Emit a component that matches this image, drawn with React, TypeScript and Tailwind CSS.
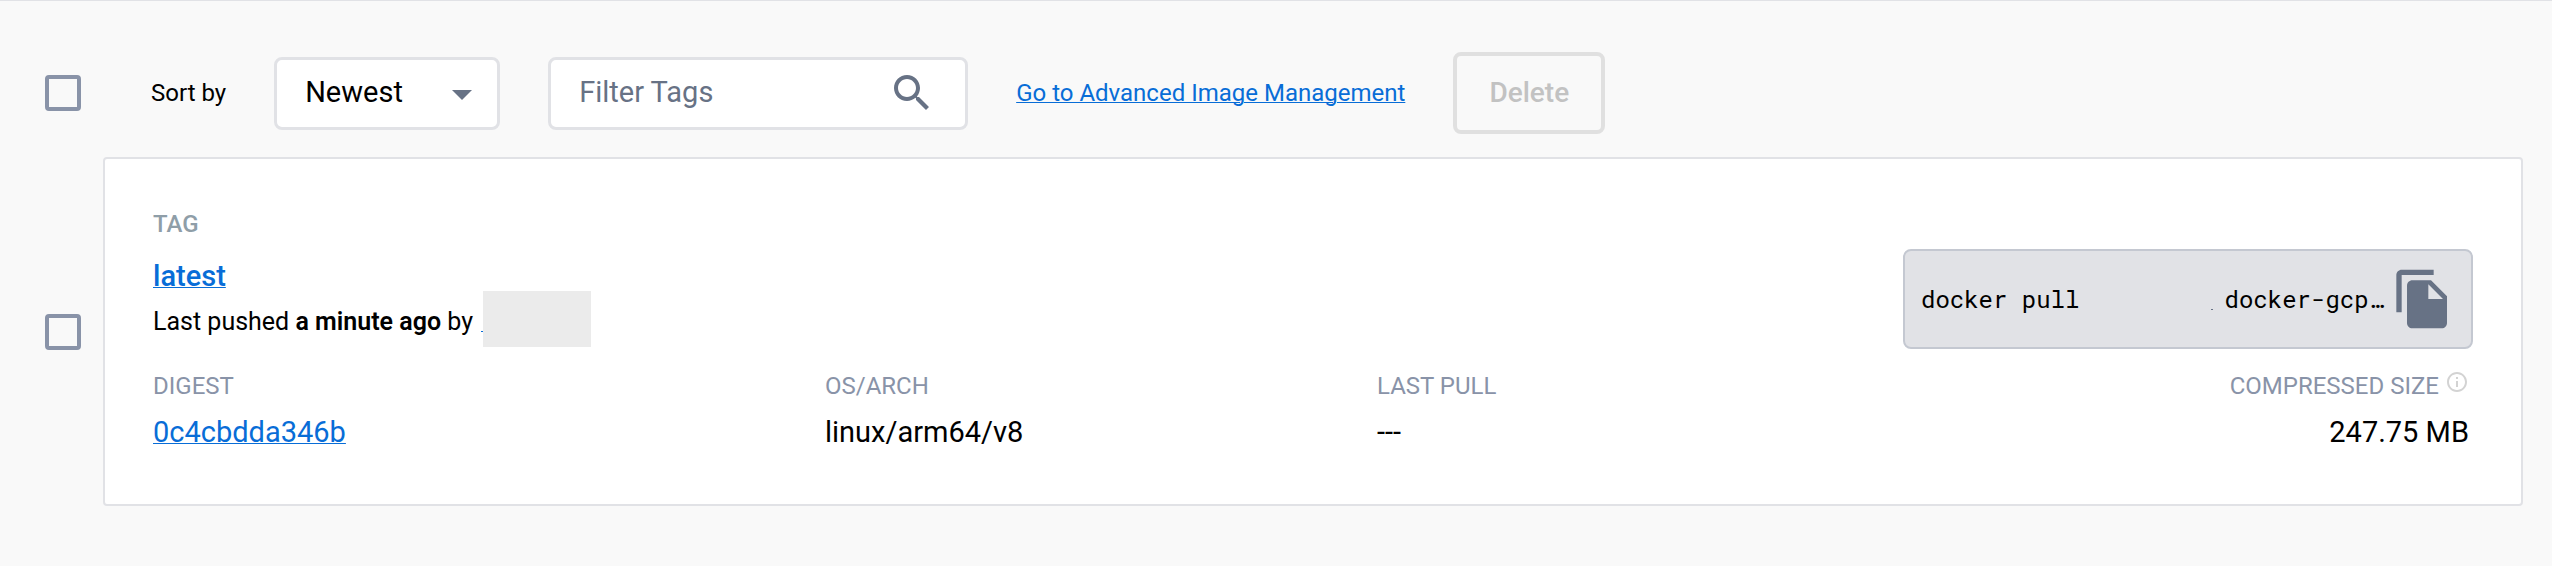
import { useState } from 'react'

const tag = {
  name: 'latest',
  pushed: 'a minute ago',
  digest: '0c4cbdda346b',
  arch: 'linux/arm64/v8',
  lastPull: '---',
  size: '247.75 MB',
}

const linkStyle = 'text-[#086dd7] underline decoration-1 underline-offset-1'

function Checkbox({ label }: { label: string }) {
  return (
    <input
      type="checkbox"
      aria-label={label}
      className="w-9 h-9 shrink-0 appearance-none rounded border-4 border-[#8993a8] checked:bg-[#8993a8]"
    />
  )
}

function Toolbar() {
  const [sort, setSort] = useState('newest')
  const [filter, setFilter] = useState('')

  return (
    <div className="flex items-center">
      <Checkbox label="Select all tags" />
      <label htmlFor="sort" className="ml-[70px] text-2xl">
        Sort by
      </label>

      <div className="relative ml-12 w-[226px] h-[73px]">
        <select
          id="sort"
          value={sort}
          onChange={e => setSort(e.target.value)}
          className="w-full h-full appearance-none rounded-lg border-3 border-[#e1e2e6] bg-white px-7 text-[29px]"
        >
          <option value="newest">Newest</option>
          <option value="oldest">Oldest</option>
        </select>
        <svg viewBox="0 0 24 24" className="absolute right-[14px] top-[13px] w-12 h-12 fill-[#677285] pointer-events-none">
          <path d="M7 10l5 5 5-5z" />
        </svg>
      </div>

      <div className="ml-12 flex items-center w-[420px] h-[73px] rounded-lg border-3 border-[#e1e2e6] bg-white pl-7 pr-[29px]">
        <input
          type="text"
          aria-label="Filter Tags"
          placeholder="Filter Tags"
          value={filter}
          onChange={e => setFilter(e.target.value)}
          className="flex-1 min-w-0 text-[29px] outline-none placeholder:text-[#677285]"
        />
        <svg viewBox="0 0 24 24" className="w-12 h-12 fill-[#677285]">
          <path d="M15.5 14h-.79l-.28-.27C15.41 12.59 16 11.11 16 9.5 16 5.91 13.09 3 9.5 3S3 5.91 3 9.5 5.91 16 9.5 16c1.61 0 3.09-.59 4.23-1.57l.27.28v.79l5 4.99L20.49 19l-4.99-5zm-6 0C7.01 14 5 11.99 5 9.5S7.01 5 9.5 5 14 7.01 14 9.5 11.99 14 9.5 14z" />
        </svg>
      </div>

      <a href="#manage" className={`ml-12 text-2xl ${linkStyle}`}>
        Go to Advanced Image Management
      </a>
      <button
        disabled
        className="ml-12 w-[152px] h-[82px] rounded-lg border-4 border-[#e0e0e0] text-[28px] font-medium text-[#c2c2c2]"
      >
        Delete
      </button>
    </div>
  )
}

function PullCommand() {
  return (
    <div className="mt-[41px] flex items-center w-[570px] h-[100px] rounded-lg border-2 border-[#c4c8d1] bg-[#e1e2e6] pl-4 pr-4">
      <code className="flex-1 flex items-center font-['Roboto_Mono','DejaVu_Sans_Mono',monospace] text-2xl">
        docker pull
        <span className="ml-auto mr-3 mt-5 w-[2px] h-px bg-[#677285]" />
        <span className="mr-2">docker-gcp…</span>
      </code>
      <button aria-label="Copy pull command">
        <svg viewBox="0 0 24 24" className="w-16 h-16 fill-[#677285]">
          <path d="M16 1H4c-1.1 0-2 .9-2 2v14h2V3h12V1zm-1 4l6 6v10c0 1.1-.9 2-2 2H7.99C6.89 23 6 22.1 6 21l.01-14c0-1.1.89-2 1.99-2h7zm-1 7h5.5L14 6.5V12z" />
        </svg>
      </button>
    </div>
  )
}

function TagCard() {
  return (
    <div className="flex-1 rounded border-2 border-[#e1e2e6] bg-white px-12 pt-[49px] pb-[52px]">
      <div className="flex justify-between">
        <div>
          <p className="text-2xl/8 font-medium text-[#8f9ea8]">TAG</p>
          <a href="#latest" className={`mt-4 block w-fit text-[29px]/10 font-medium ${linkStyle}`}>
            {tag.name}
          </a>
          <div className="mt-[10px] flex h-8 text-[25px]/8">
            <p>
              Last pushed <span className="font-semibold">{tag.pushed}</span> by
            </p>
            <a href="#user" aria-label="User" className="ml-2 flex">
              <span className="mt-[25px] w-[2px] h-px bg-[#086dd7]" />
              <span className="-mt-[15px] w-[108px] h-14 bg-[#ebebeb]" />
            </a>
          </div>
        </div>
        <PullCommand />
      </div>

      <dl className="mt-[21px] grid grid-cols-[672fr_552fr_546fr_546fr] pr-1 text-[29px]/10 [&_dt]:text-2xl/8 [&_dt]:text-[#8993a8] [&_dd]:mt-[10px]">
        <div>
          <dt>DIGEST</dt>
          <dd>
            <a href="#digest" className={linkStyle}>
              {tag.digest}
            </a>
          </dd>
        </div>
        <div>
          <dt>OS/ARCH</dt>
          <dd>{tag.arch}</dd>
        </div>
        <div>
          <dt>LAST PULL</dt>
          <dd>{tag.lastPull}</dd>
        </div>
        <div className="text-right">
          <dt className="flex justify-end gap-2 pr-[2px]">
            COMPRESSED SIZE
            <svg viewBox="2 2 20 20" className="w-5 h-5 mt-[2px] fill-[#d3d3d3]">
              <path d="M11 7h2v2h-2zm0 4h2v6h-2zm1-9C6.48 2 2 6.48 2 12s4.48 10 10 10 10-4.48 10-10S17.52 2 12 2zm0 18c-4.41 0-8-3.59-8-8s3.59-8 8-8 8 3.59 8 8-3.59 8-8 8z" />
            </svg>
          </dt>
          <dd>{tag.size}</dd>
        </div>
      </dl>
    </div>
  )
}

export default function App() {
  return (
    <main className="min-h-screen border-t border-[#e1e2e6] bg-[#f9f9f9] pl-[45px] pr-[29px] pt-[51px] pb-[56px] font-[Roboto,sans-serif] text-black">
      <Toolbar />
      <div className="mt-[23px] flex items-center gap-[22px]">
        <Checkbox label={`Select tag ${tag.name}`} />
        <TagCard />
      </div>
    </main>
  )
}
